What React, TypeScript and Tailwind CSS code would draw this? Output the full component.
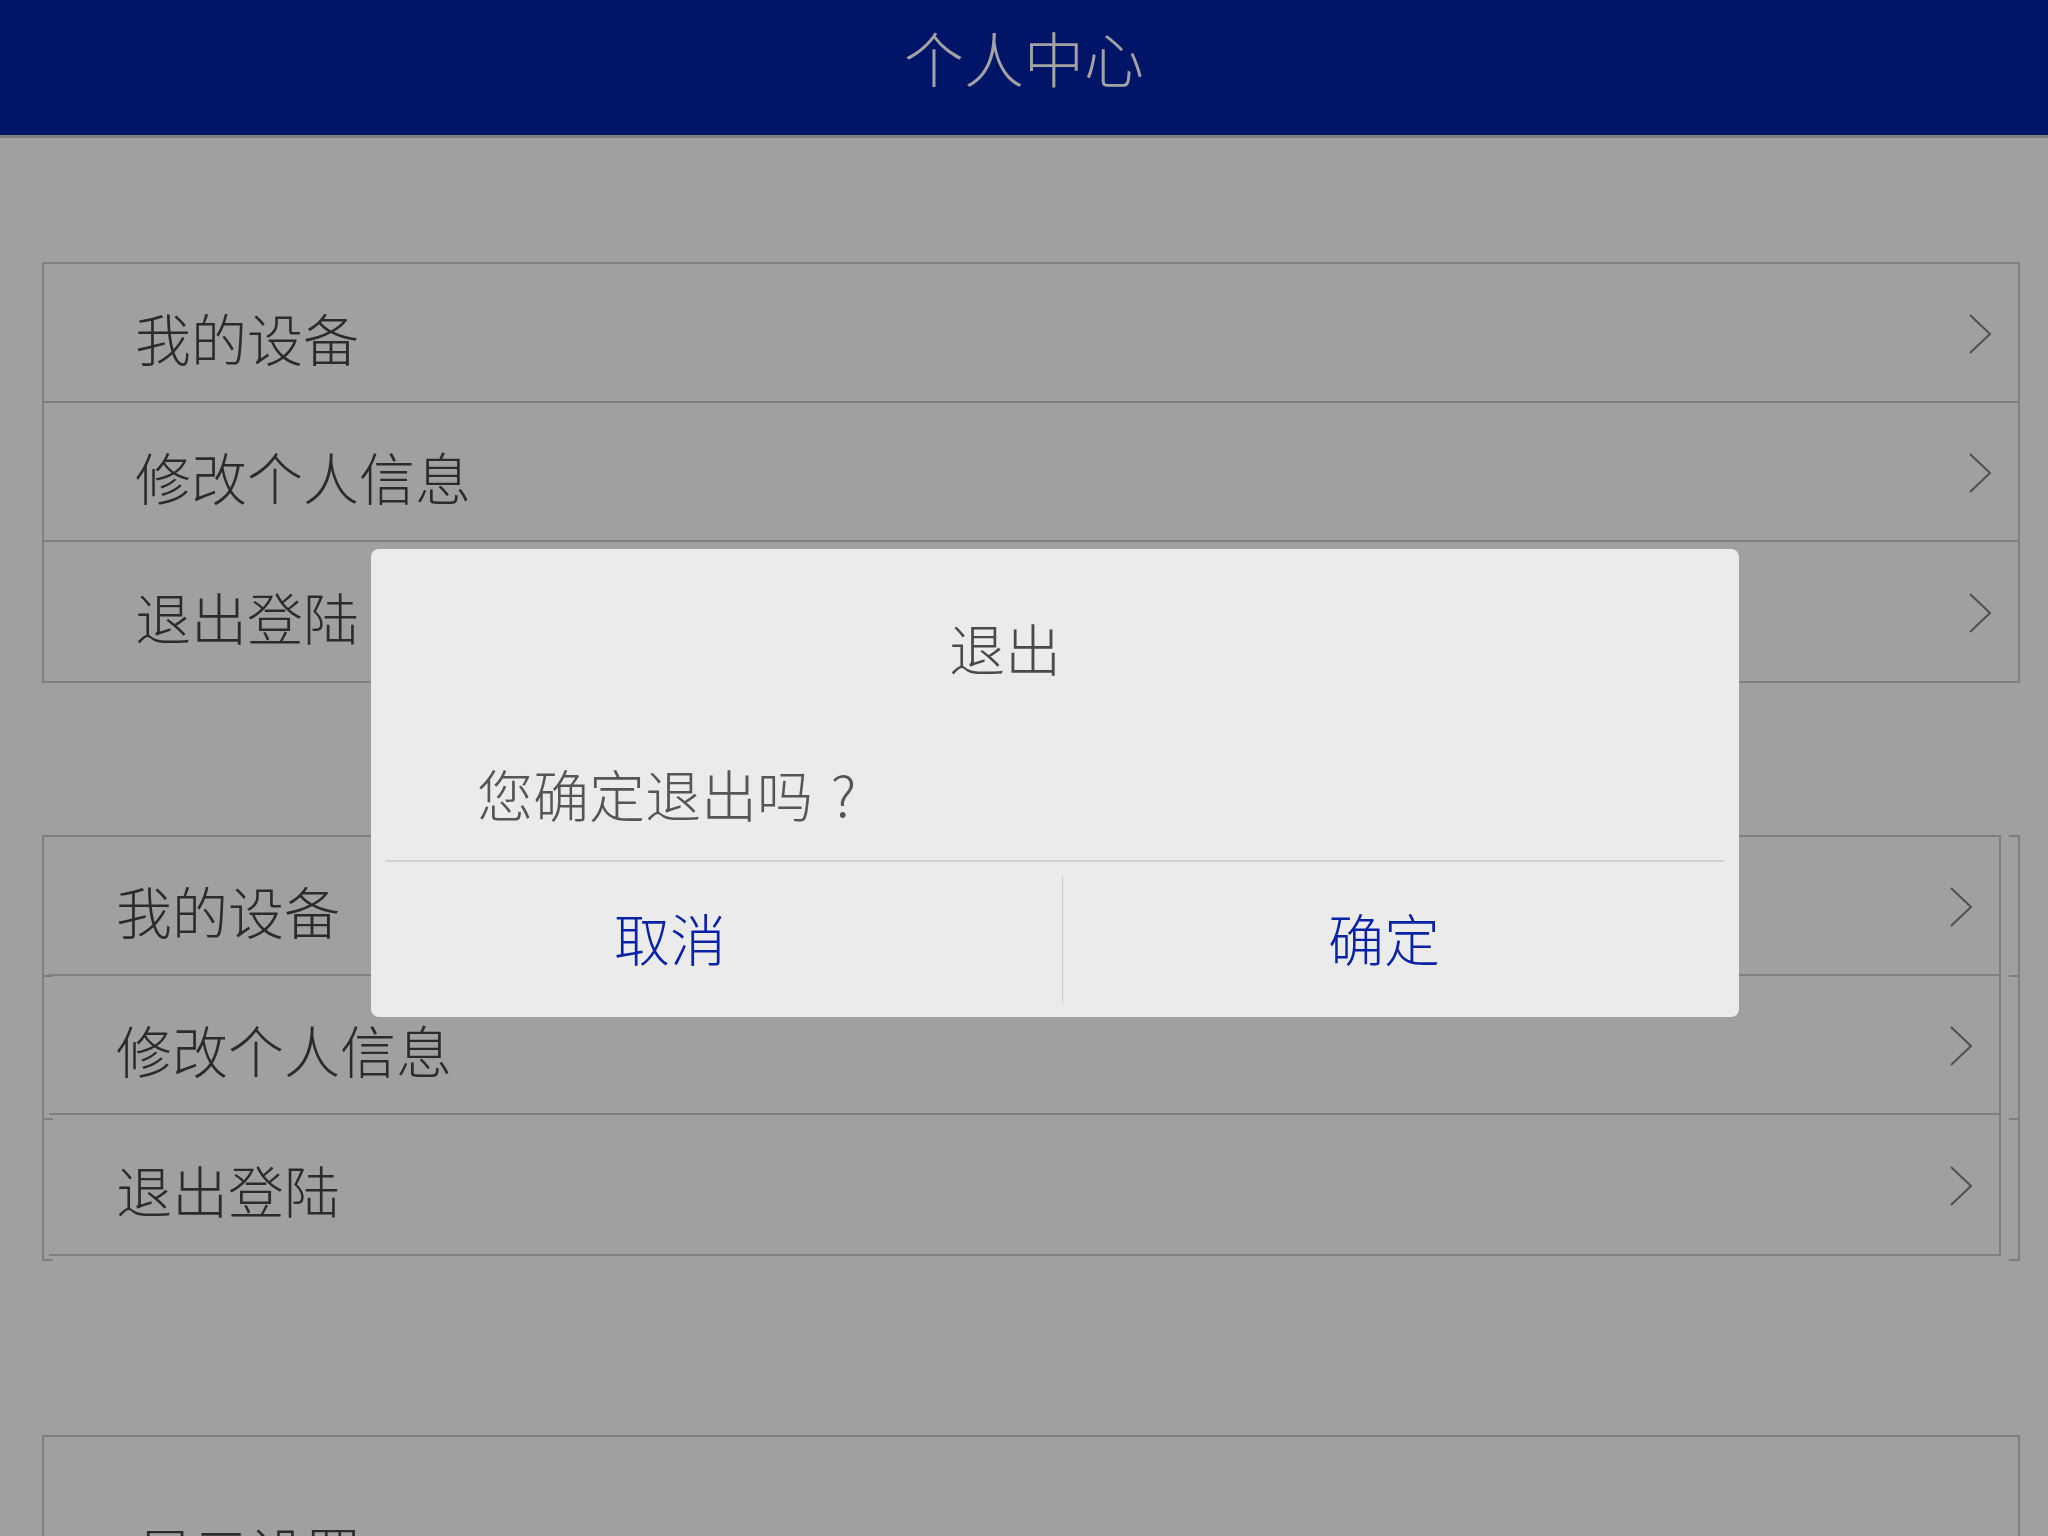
import { ReactNode } from 'react';

const menuItems = ['我的设备', '修改个人信息', '退出登陆'];

const cjk = { fontFamily: '"Noto Sans CJK SC", "Noto Sans", sans-serif' };

function Chevron() {
    return (
        <svg width='24' height='42' viewBox='0 0 24 42' fill='none'>
            <polyline points='2,2 22,21 2,40' stroke='#4f4f4f' strokeWidth='2' strokeLinejoin='miter' />
        </svg>
    );
}

function Row({ label, last, padLeft }: { label: string; last?: boolean; padLeft: string }) {
    return (
        <div className={`flex items-center justify-between h-[139px] ${last ? '' : 'border-b-2 border-[#7f7f7f]'}`}>
            <span className={`${padLeft} pt-[9px] text-[56px] leading-none font-light text-[#2b2b2b]`}>{label}</span>
            <div className='pr-[26px] pt-[2px]'>
                <Chevron />
            </div>
        </div>
    );
}

function Tick({ className }: { className: string }) {
    return <span className={`absolute h-[2px] w-[9px] bg-[#7f7f7f] ${className}`} />;
}

function Dialog({ children }: { children: ReactNode }) {
    return (
        <div className='absolute left-[371px] top-[549px] w-[1368px] h-[468px] rounded-[8px] bg-[#ebebeb] flex flex-col'>
            {children}
        </div>
    );
}

export default function App() {
    return (
        <div className='relative w-[2048px] h-[1536px] overflow-hidden bg-[#a0a0a0]' style={cjk}>
            <header className='h-[138px] bg-[#001568] border-b-[3px] border-[#7d7d7d] flex justify-center pt-[27px]'>
                <h1 className='text-[60px] leading-none font-light text-[#a3a3a3]'>个人中心</h1>
            </header>

            {/* first group */}
            <div className='ml-[42px] mr-[28px] mt-[124px] border-2 border-[#7f7f7f]'>
                {menuItems.map((item, i) => (
                    <Row key={item} label={item} last={i === menuItems.length - 1} padLeft='pl-[91px]' />
                ))}
            </div>

            {/* second group, shifted copy with bracket outline */}
            <div className='relative ml-[42px] mr-[28px] mt-[164px] h-[426px] border-x-2 border-[#7f7f7f]'>
                <Tick className='left-0 top-0' />
                <Tick className='left-0 top-[140px]' />
                <Tick className='left-0 top-[283px]' />
                <Tick className='left-0 bottom-0' />
                <Tick className='right-0 top-0' />
                <Tick className='right-0 top-[140px]' />
                <Tick className='right-0 top-[283px]' />
                <Tick className='right-0 bottom-0' />
                <div className='ml-[5px] mr-[17px] -mt-[12px] border-y-2 border-r-2 border-[#7f7f7f] bg-[#a0a0a0]'>
                    {menuItems.map((item, i) => (
                        <Row key={item} label={item} last={i === menuItems.length - 1} padLeft='pl-[67px]' />
                    ))}
                </div>
            </div>

            {/* third group, cut off by the screen */}
            <div className='ml-[42px] mr-[28px] mt-[174px] h-[200px] border-2 border-[#7f7f7f] pl-[93px] pt-[86px]'>
                <span className='text-[56px] leading-none font-light text-[#2b2b2b]'>显示设置</span>
            </div>

            <Dialog>
                <div className='h-[200px] flex items-center justify-center pr-[100px] pb-[4px]'>
                    <span className='text-[56px] leading-none font-light text-[#4a4a4a]'>退出</span>
                </div>
                <div className='h-[92px] flex items-center pl-[106px] pb-[4px]'>
                    <span className='text-[56px] leading-none font-light text-[#555555]'>
                        您确定退出吗<span className='inline-block ml-[18px]'>?</span>
                    </span>
                </div>
                <div className='h-[19px]' />
                <div className='h-[2px] mx-[15px] bg-[#d2d2d2]' />
                <div className='flex-1 flex py-[14px]'>
                    <button className='w-[691px] flex items-center justify-center pr-[93px] pb-[6px] text-[56px] leading-none font-light text-[#0a22a6]'>取消</button>
                    <div className='w-px bg-[#c9c9c9]' />
                    <button className='flex-1 flex items-center justify-center pr-[34px] pb-[6px] text-[56px] leading-none font-light text-[#0a22a6]'>确定</button>
                </div>
            </Dialog>
        </div>
    );
}
